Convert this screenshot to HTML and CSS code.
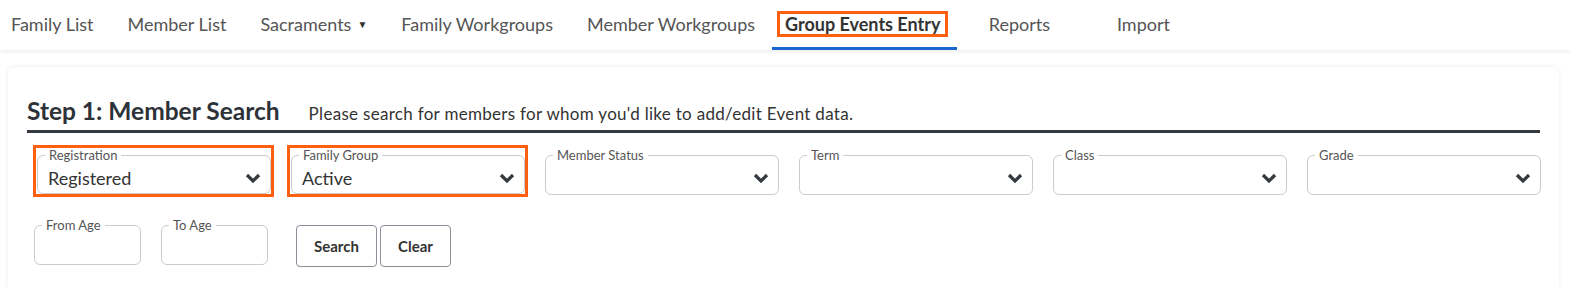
FILE: index.html
```html
<!DOCTYPE html>
<html lang="en">
<head>
  <meta charset="UTF-8">
  <title>Group Events Entry</title>
  <meta name="viewport" content="width=device-width, initial-scale=1.0">
  <link rel="stylesheet" href="styles.css">
</head>
<body>
  <nav class="topnav">
    <a href="#" class="nav-item first">Family List</a>
    <a href="#" class="nav-item">Member List</a>
    <a href="#" class="nav-item">Sacraments <span class="caret">&#9660;</span></a>
    <a href="#" class="nav-item">Family Workgroups</a>
    <a href="#" class="nav-item">Member Workgroups</a>
    <a href="#" class="nav-item active"><span class="flag">Group Events Entry</span></a>
    <a href="#" class="nav-item wide">Reports</a>
    <a href="#" class="nav-item wide">Import</a>
  </nav>

  <div class="card">
    <div class="step-head">
      <h2>Step 1: Member Search</h2>
      <p>Please search for members for whom you'd like to add/edit Event data.</p>
    </div>

    <div class="filters">
      <div class="flag-box">
        <fieldset class="field">
          <legend>Registration</legend>
          <select><option>Registered</option></select>
          <svg class="chev" viewBox="0 0 16 10"><polyline points="2,2 8,8 14,2"/></svg>
        </fieldset>
      </div>
      <div class="flag-box">
        <fieldset class="field">
          <legend>Family Group</legend>
          <select><option>Active</option></select>
          <svg class="chev" viewBox="0 0 16 10"><polyline points="2,2 8,8 14,2"/></svg>
        </fieldset>
      </div>
      <fieldset class="field">
        <legend>Member Status</legend>
        <select><option></option></select>
        <svg class="chev" viewBox="0 0 16 10"><polyline points="2,2 8,8 14,2"/></svg>
      </fieldset>
      <fieldset class="field">
        <legend>Term</legend>
        <select><option></option></select>
        <svg class="chev" viewBox="0 0 16 10"><polyline points="2,2 8,8 14,2"/></svg>
      </fieldset>
      <fieldset class="field">
        <legend>Class</legend>
        <select><option></option></select>
        <svg class="chev" viewBox="0 0 16 10"><polyline points="2,2 8,8 14,2"/></svg>
      </fieldset>
      <fieldset class="field">
        <legend>Grade</legend>
        <select><option></option></select>
        <svg class="chev" viewBox="0 0 16 10"><polyline points="2,2 8,8 14,2"/></svg>
      </fieldset>
    </div>

    <div class="filters-row">
      <fieldset class="field small">
        <legend>From Age</legend>
        <input type="text">
      </fieldset>
      <fieldset class="field small">
        <legend>To Age</legend>
        <input type="text">
      </fieldset>
      <div class="actions">
        <button class="btn search">Search</button>
        <button class="btn">Clear</button>
      </div>
    </div>
  </div>
</body>
</html>
```

FILE: styles.css
```css
body {
  font-family: Lato, "Open Sans", sans-serif;
  background: #fff;
  color: #333;
  margin: 0;
}
.topnav {
  display: flex;
  height: 50px;
  background: #fff;
  box-shadow: 0 2px 4px rgba(0,0,0,0.07);
}
.nav-item {
  display: flex;
  align-items: center;
  padding: 0 17px;
  border-bottom: 3px solid transparent;
  color: #555;
  font-size: 18px;
  text-decoration: none;
  white-space: nowrap;
}
.nav-item.first {
  padding-left: 11px;
}
.nav-item.wide {
  justify-content: center;
  min-width: 124px;
  padding: 0;
}
.caret {
  font-size: 10px;
  margin-left: 6px;
  color: #333;
}
.nav-item.active {
  border-bottom-color: #1a66d2;
  color: #333;
  font-weight: bold;
  padding: 0 9px 0 5px;
}
.flag {
  border: 3px solid #ff6010;
  padding: 0 5px;
  line-height: 20px;
}
.card {
  margin: 17px 11px 0 8px;
  padding: 28px 19px 30px;
  background: #fff;
  border-radius: 6px;
  box-shadow: 0 0 4px rgba(0,0,0,0.08);
}
.step-head {
  display: flex;
  align-items: baseline;
  height: 32px;
  padding-bottom: 3px;
  border-bottom: 3px solid #343a40;
}
.step-head h2 {
  margin: 0;
  font-size: 24.5px;
  line-height: 32px;
  color: #2d3238;
}
.step-head p {
  margin: 0 0 0 29px;
  font-size: 17px;
  letter-spacing: 0.3px;
  color: #333;
}
.filters {
  display: grid;
  grid-template-columns: repeat(6, 234px);
  column-gap: 20px;
  margin: 16px 0 0 10px;
}
.flag-box {
  margin: -4px -3px -2px -4px;
  padding: 1px 0 0 1px;
  border: 3px solid #ff6010;
}
.field {
  display: flex;
  align-items: center;
  margin: 0;
  padding: 0 9px 0 10px;
  min-width: 0;
  border: 1px solid #ccc;
  border-radius: 6px;
}
.field legend {
  margin-left: -3px;
  padding: 0 4px;
  font-size: 13px;
  line-height: 13px;
  color: #555;
}
.field select {
  flex: 1;
  height: 31px;
  padding: 0;
  border: none;
  background: transparent;
  font-family: inherit;
  font-size: 18px;
  color: #333;
  appearance: none;
  -webkit-appearance: none;
}
.chev {
  width: 16px;
  height: 10px;
  fill: none;
  stroke: #343a40;
  stroke-width: 3.2;
}
.filters-row {
  display: flex;
  align-items: flex-start;
  margin: 24px 0 0 7px;
}
.field.small {
  width: 107px;
  box-sizing: border-box;
  margin-right: 20px;
}
.field input {
  width: 100%;
  height: 32px;
  padding: 0;
  border: none;
  font-family: inherit;
  font-size: 16px;
  outline: none;
}
.actions {
  display: flex;
  gap: 3px;
  margin: 6px 0 0 8px;
}
.btn {
  height: 42px;
  padding: 0 17px;
  border: 1px solid #8a8f99;
  border-radius: 4px;
  background: #fff;
  color: #333;
  font-family: inherit;
  font-size: 15px;
  font-weight: bold;
  cursor: pointer;
}
.btn.search {
  width: 81px;
}
```
